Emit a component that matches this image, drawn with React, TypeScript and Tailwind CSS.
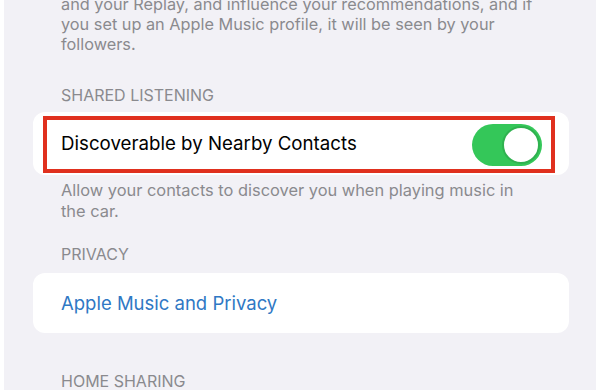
import React from "react";

const font = { fontFamily: '"Inter", "Liberation Sans", sans-serif' };

const Toggle = () => (
    <div className="w-[70px] h-[42px] rounded-full bg-[#34c759] flex items-center justify-end p-[2px]">
        <div className="w-[38px] h-[38px] rounded-full bg-white border-2 border-[#2fb24f]" />
    </div>
);

export default function App() {
    return (
        <div className="w-[600px] h-[390px] bg-white px-[4px] overflow-hidden" style={font}>
            <div className="h-full bg-[#f2f1f6] pl-[29px] pr-[27px] overflow-hidden">
                {/* top paragraph, first line cut off */}
                <div className="-mt-[6px] pl-[28px] pr-[4px] text-[16.3px] leading-[20px] text-[#8a8a8e]">
                    <p>and your Replay, and influence your recommendations, and if</p>
                    <p>you set up an Apple Music profile, it will be seen by your</p>
                    <p>followers.</p>
                </div>

                <p className="mt-[31px] pl-[28px] text-[16px] leading-[20px] text-[#8a8a8e]">SHARED LISTENING</p>

                {/* Shared listening card */}
                <div className="mt-[7px] h-[63px] bg-white rounded-[12px] flex items-center pl-[10px] pr-[14px]">
                    <div className="flex-1 h-[57px] mt-[2px] border-4 border-[#e0301e] flex items-center justify-between pl-[14px] pr-[9px]">
                        <span className="text-[18.7px] text-black">Discoverable by Nearby Contacts</span>
                        <Toggle />
                    </div>
                </div>

                <div className="mt-[5px] pl-[28px] text-[16.4px] leading-[21px] text-[#8a8a8e]">
                    <p>Allow your contacts to discover you when playing music in</p>
                    <p>the car.</p>
                </div>

                <p className="mt-[22px] pl-[28px] text-[16px] leading-[20px] text-[#8a8a8e]">PRIVACY</p>

                {/* Privacy card */}
                <div className="mt-[9px] h-[60px] bg-white rounded-[12px] flex items-center pl-[28px]">
                    <span className="text-[18.5px] text-[#2f78c4] mt-[1px]">Apple Music and Privacy</span>
                </div>

                <p className="mt-[38px] pl-[28px] text-[16px] leading-[20px] text-[#8a8a8e]">HOME SHARING</p>
            </div>
        </div>
    );
}
